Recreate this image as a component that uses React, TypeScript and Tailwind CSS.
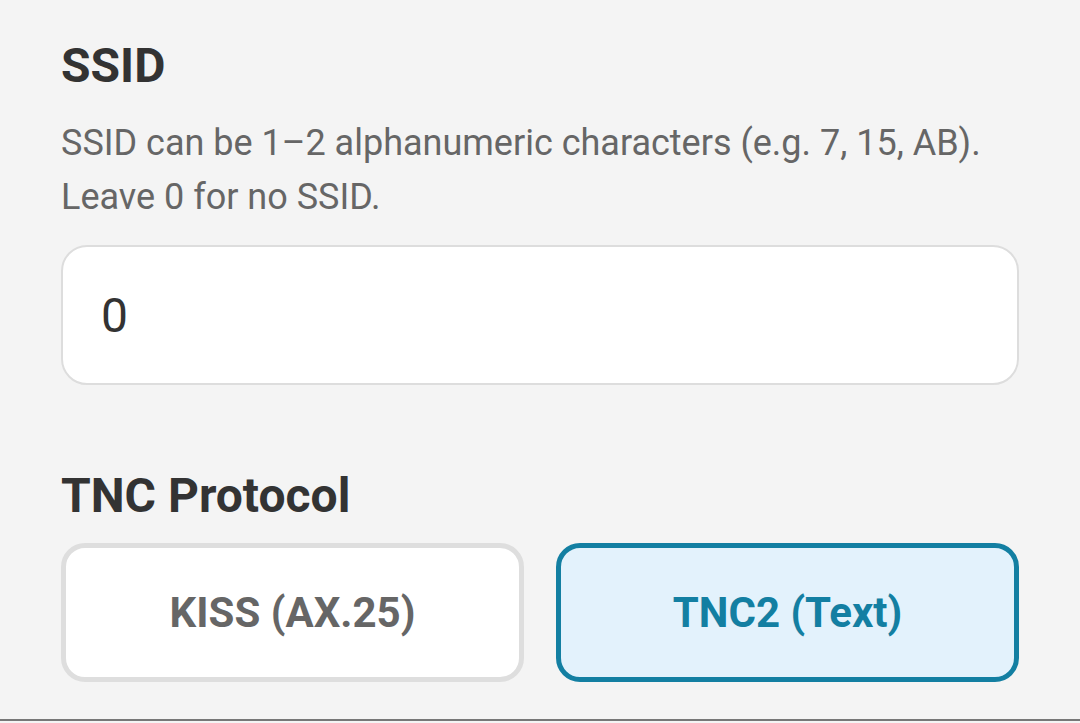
import { useState } from "react";

type Protocol = "kiss" | "tnc2";

const protocols: { id: Protocol; label: string }[] = [
  { id: "kiss", label: "KISS (AX.25)" },
  { id: "tnc2", label: "TNC2 (Text)" },
];

const App = () => {
  const [ssid, setSsid] = useState("0");
  const [protocol, setProtocol] = useState<Protocol>("tnc2");

  return (
    <div
      className="h-[723px] bg-[#f4f4f4] flex flex-col overflow-hidden"
      style={{ fontFamily: "Roboto, 'Noto Sans', sans-serif" }}
    >
      <div className="flex-1 px-[61px] pt-[38px]">
        {/* SSID field */}
        <h2 className="text-[48px] leading-[56px] font-bold text-[#333333]">SSID</h2>
        <p className="mt-[22px] text-[36px] leading-[54px] text-[#666666]">
          SSID can be 1–2 alphanumeric characters (e.g. 7, 15, AB).
          <br />
          Leave 0 for no SSID.
        </p>
        <input
          value={ssid}
          onChange={(e) => setSsid(e.target.value)}
          className="mt-[21px] w-full h-[140px] rounded-[26px] border-2 border-[#dddddd] bg-white pl-[38px] text-[48px] text-[#333333] outline-none"
        />

        {/* TNC protocol selector */}
        <h2 className="mt-[83px] text-[48px] leading-[56px] font-bold text-[#333333]">
          TNC Protocol
        </h2>
        <div className="mt-[19px] grid grid-cols-2 gap-[32px]">
          {protocols.map((p) => {
            const active = p.id === protocol;
            return (
              <button
                key={p.id}
                onClick={() => setProtocol(p.id)}
                className={
                  active
                    ? "h-[139px] rounded-[24px] border-[5px] border-[#137fa2] bg-[#e3f2fc] text-[42px] font-bold text-[#137fa2]"
                    : "h-[139px] rounded-[24px] border-[5px] border-[#dedede] bg-white text-[42px] font-bold text-[#666666]"
                }
              >
                {p.label}
              </button>
            );
          })}
        </div>
      </div>
      <div className="h-[4px] border-t-2 border-[#777777] bg-[#f4f4f4]" />
    </div>
  );
};

export default App;
